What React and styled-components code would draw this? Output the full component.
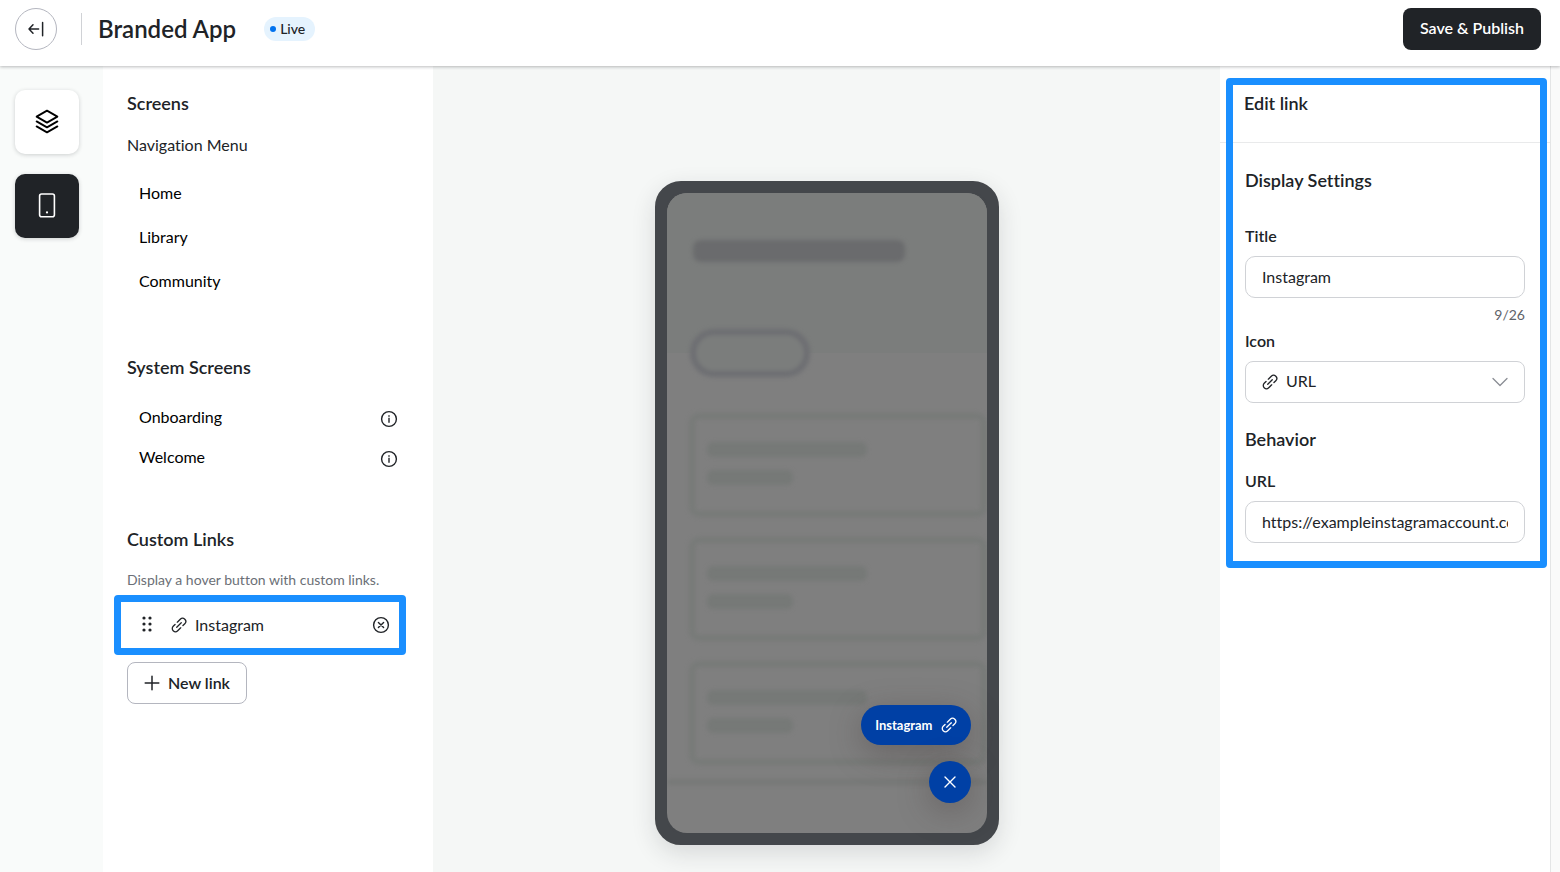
import { useState } from "react";
import styled, { createGlobalStyle } from "styled-components";

const screens = ["Home", "Library", "Community"];
const systemScreens = ["Onboarding", "Welcome"];
const previewCards = [1, 2, 3];

const LinkIcon = ({ size = 16 }) => (
  <svg width={size} height={size} viewBox="0 0 16 16" fill="none" stroke="currentColor" strokeWidth="1.3" strokeLinecap="round" aria-hidden="true">
    <g transform="rotate(-45 8 8)">
      <path d="M8.8 4.8H13a3.2 3.2 0 0 1 0 6.4h-2.6" />
      <path d="M5.6 4.8H3a3.2 3.2 0 0 0 0 6.4h4.2" />
      <path d="M4.8 8h6.4" />
    </g>
  </svg>
);

const BackIcon = () => (
  <svg width="18" height="18" viewBox="0 0 18 18" fill="none" stroke="currentColor" strokeWidth="1.5" strokeLinecap="round" strokeLinejoin="round" aria-hidden="true">
    <path d="M6 4.8L2 9l4 4.2M2 9h9.6M15.6 2.4v13.4" />
  </svg>
);

const LayersIcon = () => (
  <svg width="24" height="26" viewBox="0 0 24 26" fill="none" stroke="currentColor" strokeWidth="1.8" strokeLinecap="round" strokeLinejoin="round" aria-hidden="true">
    <path d="M12 1.6l10.4 6-10.4 6-10.4-6z" />
    <path d="M1.6 12.4l10.4 6 10.4-6" />
    <path d="M1.6 17.4l10.4 6 10.4-6" />
  </svg>
);

const PhoneIcon = () => (
  <svg width="24" height="26" viewBox="0 0 24 26" fill="none" stroke="currentColor" strokeWidth="1.6" aria-hidden="true">
    <rect x="4.6" y="1" width="14.8" height="22.8" rx="2" />
    <circle cx="12" cy="19.4" r="1.1" fill="currentColor" stroke="none" />
  </svg>
);

const InfoIcon = () => (
  <svg width="18" height="18" viewBox="0 0 18 18" fill="none" stroke="currentColor" strokeWidth="1.4" aria-hidden="true">
    <circle cx="9" cy="9" r="7.4" />
    <path d="M9 7.8v5M9 5.2v1.5" />
  </svg>
);

const RemoveIcon = () => (
  <svg width="18" height="18" viewBox="0 0 18 18" fill="none" stroke="currentColor" strokeWidth="1.4" strokeLinecap="round" aria-hidden="true">
    <circle cx="9" cy="9" r="7.4" />
    <path d="M6.4 6.4l5.2 5.2M11.6 6.4l-5.2 5.2" />
  </svg>
);

const DragIcon = () => (
  <svg width="16" height="18" viewBox="0 0 16 18" fill="currentColor" aria-hidden="true">
    {[2, 8, 14].map((y) => (
      <g key={y}>
        <circle cx="5" cy={y} r="1.6" />
        <circle cx="11" cy={y} r="1.6" />
      </g>
    ))}
  </svg>
);

const PlusIcon = () => (
  <svg width="16" height="16" viewBox="0 0 16 16" fill="none" stroke="currentColor" strokeWidth="1.5" strokeLinecap="round" aria-hidden="true">
    <path d="M8 1.2v13.6M1.2 8h13.6" />
  </svg>
);

const CloseIcon = () => (
  <svg width="14" height="14" viewBox="0 0 14 14" fill="none" stroke="currentColor" strokeWidth="1.4" strokeLinecap="round" aria-hidden="true">
    <path d="M2 2l10 10M12 2L2 12" />
  </svg>
);

const ChevronIcon = () => (
  <svg width="16" height="10" viewBox="0 0 16 10" fill="none" stroke="currentColor" strokeWidth="1.3" strokeLinecap="round" strokeLinejoin="round" aria-hidden="true">
    <path d="M1 1.5l7 7 7-7" />
  </svg>
);

const App = () => {
  const [link, setLink] = useState({
    title: "Instagram",
    icon: "url",
    url: "https://exampleinstagramaccount.com",
  });

  const { title, icon, url } = link;

  const handleInput = (name) => (e) => {
    setLink({ ...link, [name]: e.target.value });
  };

  return (
    <Page>
      <GlobalStyle />
      <Header>
        <BackButton type="button" aria-label="Back">
          <BackIcon />
        </BackButton>
        <Divider />
        <PageTitle>Branded App</PageTitle>
        <Badge>Live</Badge>
        <PublishButton type="button">Save &amp; Publish</PublishButton>
      </Header>

      <Workspace>
        <Rail>
          <RailButton type="button" aria-label="Design">
            <LayersIcon />
          </RailButton>
          <RailButton type="button" aria-label="Screens" $active>
            <PhoneIcon />
          </RailButton>
        </Rail>

        <SidePanel>
          <section>
            <Heading>Screens</Heading>
            <Subheading>Navigation Menu</Subheading>
            <ScreenList>
              {screens.map((name) => (
                <li key={name}>
                  <ScreenButton type="button">{name}</ScreenButton>
                </li>
              ))}
            </ScreenList>
          </section>

          <section>
            <Heading>System Screens</Heading>
            <SystemList>
              {systemScreens.map((name) => (
                <SystemRow key={name}>
                  <SystemButton type="button">{name}</SystemButton>
                  <IconButton type="button" aria-label={`About ${name}`}>
                    <InfoIcon />
                  </IconButton>
                </SystemRow>
              ))}
            </SystemList>
          </section>

          <section>
            <Heading>Custom Links</Heading>
            <Hint>Display a hover button with custom links.</Hint>
            <LinkRow>
              <DragIcon />
              <LinkName>
                <LinkIcon />
                {title}
              </LinkName>
              <IconButton type="button" aria-label="Remove link">
                <RemoveIcon />
              </IconButton>
            </LinkRow>
            <NewLinkButton type="button">
              <PlusIcon />
              New link
            </NewLinkButton>
          </section>
        </SidePanel>

        <Canvas>
          <Phone>
            <Preview>
              <Hero>
                <HeroTitle />
                <HeroPill />
              </Hero>
              <CardList>
                {previewCards.map((id) => (
                  <Card key={id}>
                    <Bar $width="160px" />
                    <Bar $width="86px" />
                  </Card>
                ))}
              </CardList>
              <TabBar />
            </Preview>
            <FloatingLinks>
              <FloatingLink href="#instagram">
                {title}
                <LinkIcon />
              </FloatingLink>
              <FloatingClose type="button" aria-label="Close links">
                <CloseIcon />
              </FloatingClose>
            </FloatingLinks>
          </Phone>
        </Canvas>

        <EditPanel>
          <EditHeader>
            <Heading>Edit link</Heading>
          </EditHeader>
          <EditForm>
            <Heading>Display Settings</Heading>
            <Field $gap="32px">
              <label htmlFor="title">Title</label>
              <Input id="title" type="text" maxLength={26} value={title} onChange={handleInput("title")} />
              <Counter>{title.length}/26</Counter>
            </Field>
            <Field $gap="4px">
              <label htmlFor="icon">Icon</label>
              <SelectBox>
                <LinkIcon />
                <Select id="icon" value={icon} onChange={handleInput("icon")}>
                  <option value="url">URL</option>
                </Select>
                <ChevronIcon />
              </SelectBox>
            </Field>
            <BehaviorHeading>Behavior</BehaviorHeading>
            <Field $gap="18px">
              <label htmlFor="url">URL</label>
              <Input id="url" type="text" value={url} onChange={handleInput("url")} />
            </Field>
          </EditForm>
          <Highlight />
        </EditPanel>
        <Gutter />
      </Workspace>
    </Page>
  );
};

const GlobalStyle = createGlobalStyle`
  * {
    box-sizing: border-box;
  }
  body {
    margin: 0;
    background: #ffffff;
    color: #202327;
    font-family: Lato, "Liberation Sans", sans-serif;
    font-size: 16px;
    font-variant-ligatures: none;
    line-height: 24px;
  }
  button, input, select {
    font: inherit;
    color: inherit;
  }
  button {
    padding: 0;
    border: none;
    background: none;
    cursor: pointer;
  }
  h1, h2, p, ul {
    margin: 0;
    padding: 0;
  }
  ul {
    list-style: none;
  }
  svg {
    display: block;
    flex: none;
  }
`;

const Page = styled.div`
  display: flex;
  flex-direction: column;
  min-height: 100vh;
`;

const Header = styled.header`
  position: relative;
  z-index: 1;
  display: flex;
  align-items: flex-start;
  padding: 8px 19px 16px 15px;
  background: #ffffff;
  box-shadow: 0 1px 3px rgba(32, 35, 39, 0.3);
`;

const BackButton = styled.button`
  display: grid;
  place-items: center;
  width: 42px;
  height: 42px;
  border: 1px solid #b4b6bf;
  border-radius: 50%;
`;

const Divider = styled.div`
  width: 1px;
  height: 32px;
  margin: 5px 16px 5px 24px;
  background: #d0d2d6;
`;

const PageTitle = styled.h1`
  font-size: 24px;
  font-weight: 600;
  line-height: 42px;
`;

const Badge = styled.span`
  display: flex;
  align-items: center;
  gap: 4px;
  height: 24px;
  margin: 9px 0 0 28px;
  padding: 0 10px 0 6px;
  border-radius: 12px;
  background: #e5f3fe;
  font-size: 14px;
  font-weight: 500;

  &::before {
    content: "";
    width: 6px;
    height: 6px;
    border-radius: 50%;
    background: #0072ef;
  }
`;

const PublishButton = styled.button`
  height: 42px;
  margin-left: auto;
  padding: 0 17px 2px;
  border-radius: 8px;
  background: #202327;
  color: #ffffff;
  font-weight: 600;
`;

const Workspace = styled.div`
  flex: 1;
  display: grid;
  grid-template-columns: 103px 330px 1fr 330px 10px;
`;

const Rail = styled.nav`
  display: flex;
  flex-direction: column;
  align-items: flex-start;
  gap: 20px;
  padding: 24px 15px;
  background: #f9fbfa;
`;

const RailButton = styled.button`
  display: grid;
  place-items: center;
  width: 64px;
  height: 64px;
  border-radius: 10px;
  background: ${({ $active }) => ($active ? "#202327" : "#ffffff")};
  color: ${({ $active }) => ($active ? "#ffffff" : "#000000")};
  box-shadow: 0 1px 4px rgba(32, 35, 39, 0.2);
`;

const SidePanel = styled.aside`
  display: flex;
  flex-direction: column;
  gap: 48px;
  padding: 25px 32px 25px 24px;
`;

const Heading = styled.h2`
  font-size: 18px;
  font-weight: 600;
  line-height: 24px;
`;

const Subheading = styled.p`
  margin-top: 18px;
`;

const ScreenList = styled.ul`
  margin-top: 14px;
  padding-bottom: 4px;
`;

const ScreenButton = styled.button`
  width: 100%;
  height: 44px;
  padding-left: 12px;
  color: #000000;
  text-align: left;
`;

const SystemList = styled.ul`
  margin-top: 20px;
`;

const SystemRow = styled.li`
  display: flex;
  align-items: flex-start;
  justify-content: space-between;
  height: 40px;
  padding: 8px 0 8px 12px;
`;

const SystemButton = styled.button`
  color: #000000;
  line-height: 20px;
`;

const IconButton = styled.button`
  display: grid;
  place-items: center;
  width: 24px;
  height: 24px;
`;

const Hint = styled.p`
  margin-top: 19px;
  color: #6b6f76;
  font-size: 14px;
  line-height: 20px;
`;

const LinkRow = styled.div`
  position: relative;
  display: flex;
  align-items: center;
  gap: 16px;
  height: 46px;
  margin-top: 12px;
  padding: 0 8px 0 12px;

  &::after {
    content: "";
    position: absolute;
    inset: -7px -5px -7px -13px;
    border: 7px solid #1a8fff;
    border-radius: 4px;
    pointer-events: none;
  }
`;

const LinkName = styled.span`
  flex: 1;
  display: flex;
  align-items: center;
  gap: 8px;
`;

const NewLinkButton = styled.button`
  display: flex;
  align-items: center;
  gap: 8px;
  height: 42px;
  margin-top: 14px;
  padding: 0 16px;
  border: 1px solid #b4b6bf;
  border-radius: 8px;
  font-weight: 600;
`;

const Canvas = styled.main`
  display: flex;
  justify-content: center;
  align-items: flex-start;
  padding: 115px 24px 27px;
  background: #f5f7f6;
`;

const Phone = styled.div`
  position: relative;
  width: 344px;
  border: 12px solid #44474b;
  border-radius: 26px;
  background: #44474b;
  box-shadow: 0 8px 24px rgba(32, 35, 39, 0.14);
`;

const Preview = styled.div`
  height: 640px;
  border-radius: 20px;
  overflow: hidden;
  background: #7f7f7f;
`;

const Hero = styled.div`
  height: 160px;
  padding: 47px 0 0 23px;
  background: #7b7d7c;
`;

const HeroTitle = styled.div`
  width: 212px;
  height: 22px;
  margin-left: 3px;
  border-radius: 8px;
  background: #6a6b6d;
  filter: blur(2px);
`;

const HeroPill = styled.div`
  position: relative;
  width: 120px;
  height: 48px;
  margin-top: 67px;
  border: 6px solid #6d6e72;
  border-radius: 24px;
  background: #7b7d7c;
  filter: blur(2px);
`;

const CardList = styled.div`
  display: flex;
  flex-direction: column;
  gap: 20px;
  padding: 60px 0 0 22px;
`;

const Card = styled.div`
  display: flex;
  flex-direction: column;
  gap: 13px;
  height: 104px;
  padding: 23px 12px;
  border: 6px solid #777a78;
  border-radius: 10px;
  filter: blur(2px);
`;

const Bar = styled.div`
  width: ${({ $width }) => $width};
  height: 15px;
  border-radius: 6px;
  background: #767977;
`;

const TabBar = styled.div`
  height: 64px;
  margin-top: 14px;
  border-top: 6px solid #777978;
  filter: blur(2px);
`;

const FloatingLinks = styled.div`
  position: absolute;
  right: 16px;
  bottom: 30px;
  display: flex;
  flex-direction: column;
  align-items: flex-end;
  gap: 16px;
`;

const FloatingLink = styled.a`
  display: flex;
  align-items: center;
  gap: 8px;
  height: 40px;
  padding: 0 14px;
  border-radius: 20px;
  background: #0040a5;
  color: #ffffff;
  font-size: 13px;
  font-weight: 700;
  text-decoration: none;
  box-shadow: 0 8px 32px rgba(60, 50, 50, 0.35);
`;

const FloatingClose = styled.button`
  display: grid;
  place-items: center;
  width: 42px;
  height: 42px;
  border-radius: 50%;
  background: #0040a5;
  color: #ffffff;
  box-shadow: 0 8px 32px rgba(60, 50, 50, 0.35);
`;

const EditPanel = styled.aside`
  position: relative;
  align-self: start;
`;

const EditHeader = styled.div`
  padding: 25px 24px 27px;
  border-bottom: 1px solid #e9eaeb;
`;

const EditForm = styled.form`
  padding: 25px;
`;

const BehaviorHeading = styled(Heading)`
  margin-top: 24px;
`;

const Field = styled.div`
  margin-top: ${({ $gap }) => $gap};

  label {
    display: block;
    margin-bottom: 8px;
    font-weight: 600;
  }
`;

const Input = styled.input`
  display: block;
  width: 100%;
  height: 42px;
  padding: 0 16px 2px;
  border: 1px solid #d0d2d6;
  border-radius: 10px;
  background: #ffffff;
`;

const Counter = styled.p`
  margin-top: 7px;
  color: #5f6369;
  font-size: 14px;
  line-height: 20px;
  text-align: right;
`;

const SelectBox = styled.div`
  position: relative;

  svg {
    position: absolute;
    top: 13px;
    left: 17px;
    pointer-events: none;
  }

  svg:last-child {
    top: 16px;
    right: 17px;
    left: auto;
    color: #8a8d94;
  }
`;

const Select = styled.select`
  display: block;
  width: 100%;
  height: 42px;
  padding: 0 40px 2px;
  border: 1px solid #d0d2d6;
  border-radius: 8px;
  background: #ffffff;
  appearance: none;
`;

// frame around the settings that belong to the selected link
const Highlight = styled.div`
  position: absolute;
  inset: 12px 3px 0 6px;
  border: 7px solid #1a8fff;
  border-radius: 4px;
  pointer-events: none;
`;

const Gutter = styled.div`
  border-left: 1px solid #e4e5e6;
  background: #fafafa;
`;

export default App;
